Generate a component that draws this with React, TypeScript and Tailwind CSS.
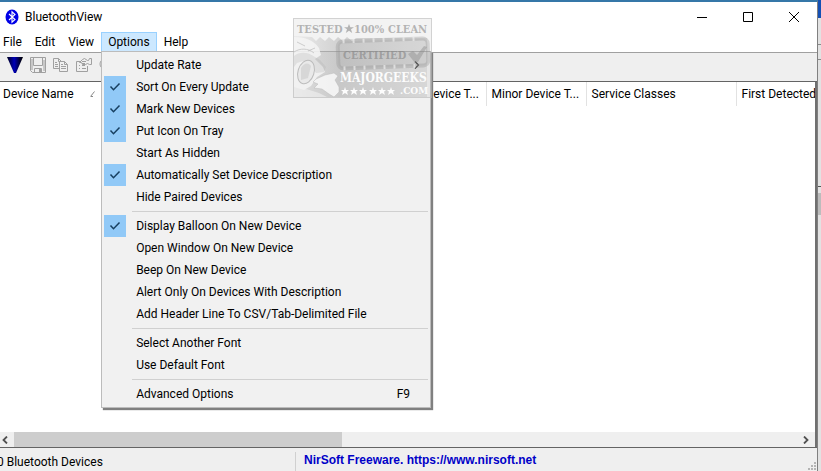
import React, { useState } from "react";
import clsx from "clsx";

type MenuEntry = {
  label: string;
  checked?: boolean;
  submenu?: boolean;
  shortcut?: string;
};

const menuGroups: MenuEntry[][] = [
  [
    { label: "Update Rate", submenu: true },
    { label: "Sort On Every Update", checked: true },
    { label: "Mark New Devices", checked: true },
    { label: "Put Icon On Tray", checked: true },
    { label: "Start As Hidden" },
    { label: "Automatically Set Device Description", checked: true },
    { label: "Hide Paired Devices" }
  ],
  [
    { label: "Display Balloon On New Device", checked: true },
    { label: "Open Window On New Device" },
    { label: "Beep On New Device" },
    { label: "Alert Only On Devices With Description" },
    { label: "Add Header Line To CSV/Tab-Delimited File" }
  ],
  [{ label: "Select Another Font" }, { label: "Use Default Font" }],
  [{ label: "Advanced Options", shortcut: "F9" }]
];

const BluetoothLogo = () => (
  <svg width="14" height="16" viewBox="0 0 14 16">
    <ellipse cx="7" cy="8" rx="6.5" ry="7.5" fill="#0000e6" />
    <path d="M4 5l6 5.5L7 13.2V2.8l3 2.7L4 11" fill="none" stroke="#fff" strokeWidth="1.1" />
  </svg>
);

const TriangleIcon = () => (
  <svg width="16" height="16" viewBox="0 0 16 16">
    <defs>
      <linearGradient id="tri" x1="0" y1="0" x2="1" y2="0">
        <stop offset="0" stopColor="#000018" />
        <stop offset="0.45" stopColor="#0000b8" />
        <stop offset="0.8" stopColor="#000030" />
        <stop offset="1" stopColor="#000" />
      </linearGradient>
    </defs>
    <path d="M0 0h16L9 16H7z" fill="url(#tri)" />
  </svg>
);

const SaveIcon = () => (
  <svg width="16" height="16" viewBox="0 0 16 16" fill="none" stroke="#a0a0a0">
    <path d="M.5.5h15v15h-13l-2-2z" />
    <path d="M3.500 .5v8h9v-8M4.500 15.500v-4h7v4M2 2v11M14 3v11" />
    <path d="M9 12h2v3H9z" fill="#a0a0a0" stroke="none" />
  </svg>
);

const CopyIcon = () => (
  <svg width="16" height="16" viewBox="0 0 16 16" fill="none" stroke="#a0a0a0">
    <path d="M6 11.500H.5v-10h5l3 3M5.500 1.500v3h3" />
    <path d="M2 5.500h2M2 7.500h3M2 9.500h3" />
    <path d="M6.500 4.500h5l3 3v7h-8zM11.500 4.500v3h3" fill="#efefef" />
    <path d="M8 7.500h2M8 9.500h5M8 11.500h5" />
  </svg>
);

const PropertiesIcon = () => (
  <svg width="16" height="16" viewBox="0 0 16 16" fill="none" stroke="#a0a0a0">
    <path d="M5 4.500H.5v10h11V9" />
    <path d="M3 8.500h1M6 8.500h3M3 11.500h1M6 11.500h4" />
    <path d="M3.500 5.500l3-3 2-1 3 2h1l1-2h2v6h-2l-2-1-2 1h-3l-1-2z" fill="#efefef" />
    <path d="M6 4.500h4M6 6.500h3" />
  </svg>
);

const FindIcon = () => (
  <svg width="16" height="16" viewBox="0 0 16 16" fill="none" stroke="#a0a0a0">
    <circle cx="6" cy="7" r="5" />
    <path d="M10 11l4 4" />
  </svg>
);

const CheckIcon = () => (
  <svg width="12" height="10" viewBox="0 0 12 10">
    <path d="M1.500 4.500l3 3.200 6-6.200" fill="none" stroke="#173f60" strokeWidth="1.500" />
  </svg>
);

const CertifiedStamp = () => (
  <svg
    className="pointer-events-none absolute left-[293px] top-4 z-20"
    width="139"
    height="80"
    viewBox="0 0 139 80"
    fontFamily="'DejaVu Serif Condensed', 'DejaVu Serif', serif"
    fontWeight="bold"
  >
    <defs>
      <linearGradient id="stampShade" x1="0" y1="0" x2="1" y2="0">
        <stop offset="0" stopColor="#888" stopOpacity=".08" />
        <stop offset="0.35" stopColor="#888" stopOpacity=".32" />
        <stop offset="1" stopColor="#888" stopOpacity=".16" />
      </linearGradient>
    </defs>
    <rect x=".5" y=".5" width="138" height="79" fill="#8a8a8a" fillOpacity=".1" stroke="#b8b8b8" strokeOpacity=".6" />
    <path d="M1 18l18 1 4 4 4-4 5 4 4-4 5 4 4-4 5 4 4-4 5 4 4-3h71v59H1z" fill="url(#stampShade)" />
    {/* face, glasses and hand */}
    <path d="M1 19c10 0 20 3 25 11l2 7-6 4 8 8 2 5-8 5-6 9-7 4-10-3z" fill="#f4f4f4" fillOpacity=".85" />
    <path d="M1 34c6-4 14-4 20 1M4 24l8 4M22 30l-7 3" fill="none" stroke="#bbb" strokeOpacity=".7" />
    <path d="M1 38c6-5 14-4 21 1l5 3 6 7-2 5-8 1-5-7-8-5-6 2-3 4z" fill="#aaa" fillOpacity=".25" />
    <ellipse cx="13" cy="54" rx="8" ry="12" fill="#e9e9e9" stroke="#bcbcbc" transform="rotate(18 13 54)" />
    <path d="M8 50c3-5 7-6 10-2l-3 12-7 2z" fill="#ccc" fillOpacity=".6" />
    <path d="M23 61l9-4 9-2 4 3-3 4 4 7v5l-5 5-5-3-7-5-8-1 4-4-5-2z" fill="#f6f6f6" fillOpacity=".9" stroke="#bbb" strokeOpacity=".5" />
    <path d="M1 67l9 3 16 5 8 4H1z" fill="#f2f2f2" fillOpacity=".6" />
    <g fill="#888" fillOpacity=".6">
      <text x="4" y="15" fontSize="11">TESTED</text>
      <path d="M56 6l1.300 3.300h3.700l-3 2 1.200 3.700-3.200-2.200-3.200 2.200L54 11.300l-3-2h3.700z" />
      <text x="61" y="15" fontSize="11">100%</text>
      <text x="95" y="15" fontSize="11">CLEAN</text>
    </g>
    <g transform="rotate(-2 90 35)">
      <rect x="45" y="22" width="90" height="27" rx="5" fill="#888" fillOpacity=".12" stroke="#8c8c8c" strokeOpacity=".3" strokeWidth="4" />
      <path d="M50 22h80M50 49h80" stroke="#eee" strokeOpacity=".7" strokeDasharray="2 8" strokeWidth="4" />
    </g>
    <text x="50" y="41" fontSize="11" fill="#858585" fillOpacity=".6">
      CERTIFIED
    </text>
    <path d="M115 36l5-3 4 4 7-9 3 1-9 15-3 1z" fill="#858585" fillOpacity=".4" />
    <g fill="#fcfcfc">
      <text x="47" y="64" fontSize="12">MAJORGEEKS</text>
      <text x="107" y="76" fontSize="10">.COM</text>
      {[52, 61, 70, 80, 89, 98].map((x) => (
        <path key={x} transform={`translate(${x} 73)`} d="M0-4l1 3h3L2 .8 3 4 0 2-3 4-2 .8-4-1h3z" />
      ))}
    </g>
  </svg>
);

const OptionsMenu = () => {
  const [groups, setGroups] = useState<MenuEntry[][]>(menuGroups);

  const handleToggle = (label: string) => {
    setGroups((prev) =>
      prev.map((group) => group.map((item) => (item.label === label && !item.submenu && !item.shortcut ? { ...item, checked: !item.checked } : item)))
    );
  };

  return (
    <div
      role="menu"
      className="absolute left-0 top-full z-10 -mt-px w-[330px] border border-[#bcbcbc] bg-[#f1f1f1] p-0.5 shadow-[2px_2px_1px_#808080]"
    >
      {groups.map((group, index) => (
        <React.Fragment key={index}>
          {index > 0 && <div role="separator" className="my-[3px] ml-7 h-px bg-[#d0d0d0]" />}
          {group.map((item) => (
            <button
              key={item.label}
              type="button"
              role={item.checked ? "menuitemcheckbox" : "menuitem"}
              aria-checked={item.checked}
              onClick={() => handleToggle(item.label)}
              className="flex h-[22px] w-full items-center text-left"
            >
              <span className={clsx("flex h-full w-[22px] items-center justify-center", item.checked && "bg-[#91c9f7]")}>
                {item.checked && <CheckIcon />}
              </span>
              <span className="flex-1 whitespace-nowrap pl-2.5">{item.label}</span>
              {item.shortcut && <span className="pr-[18px]">{item.shortcut}</span>}
              {item.submenu && (
                <svg className="mr-2" width="6" height="8" viewBox="0 0 6 8">
                  <path d="M1 .5L4.500 4 1 7.500" fill="none" stroke="#222" strokeWidth="1.200" />
                </svg>
              )}
            </button>
          ))}
        </React.Fragment>
      ))}
    </div>
  );
};

const TitleBar = () => (
  <header className="flex h-[30px] items-center bg-white pl-[5px]">
    <BluetoothLogo />
    <h1 className="flex-1 pl-1.5">BluetoothView</h1>
    <div className="flex h-full">
      <button type="button" aria-label="Minimize" className="flex w-[46px] items-center justify-center">
        <svg width="10" height="11" viewBox="0 0 10 11" stroke="#000">
          <path d="M0 5.500h10" />
        </svg>
      </button>
      <button type="button" aria-label="Maximize" className="flex w-[46px] items-center justify-center">
        <svg width="10" height="10" viewBox="0 0 10 10" fill="none" stroke="#000">
          <path d="M.5.5h9v9h-9z" />
        </svg>
      </button>
      <button type="button" aria-label="Close" className="flex w-[46px] items-center justify-center">
        <svg width="10" height="10" viewBox="0 0 10 10" stroke="#000">
          <path d="M0 0l10 10M10 0L0 10" />
        </svg>
      </button>
    </div>
  </header>
);

const MenuBar = () => {
  const [open, setOpen] = useState<boolean>(true);

  return (
    <nav className="-ml-[3px] flex h-5 gap-px bg-white">
      <button type="button" className="px-1.5">File</button>
      <button type="button" className="px-1.5">Edit</button>
      <button type="button" className="px-1.5">View</button>
      <div className="relative">
        <button
          type="button"
          aria-expanded={open}
          onClick={() => setOpen(!open)}
          className="h-full border border-[#99d1ff] bg-[#cce8ff] px-1.5"
        >
          Options
        </button>
        {open && <OptionsMenu />}
      </div>
      <button type="button" className="px-1.5">Help</button>
    </nav>
  );
};

const Toolbar = () => (
  <div className="flex h-[30px] items-center gap-[7px] border-y border-t-[#a0a0a0] border-b-[#646464] bg-[#efefef] pl-[7px] pb-1">
    <button type="button" aria-label="Start"><TriangleIcon /></button>
    <button type="button" aria-label="Save"><SaveIcon /></button>
    <button type="button" aria-label="Copy"><CopyIcon /></button>
    <button type="button" aria-label="Properties"><PropertiesIcon /></button>
    <button type="button" aria-label="Find"><FindIcon /></button>
  </div>
);

const DeviceList = () => (
  <main className="flex min-h-0 flex-1 flex-col border-r-2 border-[#707070] bg-white">
    <div className="flex-1 overflow-hidden">
      <table className="w-[886px] table-fixed">
        <thead>
          <tr className="h-6 text-left">
            <th className="w-[386px] border-r border-[#e2e2e2] pl-[3px] font-normal">
              <span className="flex items-center gap-4">
                Device Name
                <svg width="5" height="6" viewBox="0 0 5 6">
                  <path d="M.5 5.500L4.500 .5M1 5.500h2" stroke="#888" fill="none" />
                </svg>
              </span>
            </th>
            <th className="w-[100px] border-r border-[#e2e2e2] pl-[5px] font-normal">Major Device T...</th>
            <th className="w-[100px] border-r border-[#e2e2e2] pl-[5px] font-normal">Minor Device T...</th>
            <th className="w-[150px] border-r border-[#e2e2e2] pl-[5px] font-normal">Service Classes</th>
            <th className="w-[150px] pl-[5px] font-normal">First Detected</th>
          </tr>
        </thead>
      </table>
    </div>
    <div className="flex h-[15px] bg-[#efefef]">
      <button type="button" aria-label="Scroll left" className="flex w-3.5 items-center pl-0.5">
        <svg width="6" height="8" viewBox="0 0 6 8">
          <path d="M5 .5L1.500 4 5 7.500" fill="none" stroke="#505050" strokeWidth="1.800" />
        </svg>
      </button>
      <div className="flex-1">
        <div className="h-full w-5/12 bg-[#cdcdcd]" />
      </div>
      <button type="button" aria-label="Scroll right" className="flex w-3.5 items-center pl-0.5">
        <svg width="6" height="8" viewBox="0 0 6 8">
          <path d="M1 .5L4.500 4 1 7.500" fill="none" stroke="#505050" strokeWidth="1.800" />
        </svg>
      </button>
    </div>
  </main>
);

const StatusBar = () => (
  <footer className="flex h-6 border-t border-[#646464] bg-[#efefef] pt-0.5">
    <div className="-ml-[3px] mt-0.5 w-[299px] border-r border-[#d0d0d0] pt-0.5">0 Bluetooth Devices</div>
    <a href="https://www.nirsoft.net" className="flex-1 pl-2 pt-0.5 font-['Liberation_Sans',sans-serif] font-bold text-[#0000c8]">
      NirSoft Freeware. https://www.nirsoft.net
    </a>
    <svg className="self-end" width="10" height="9" viewBox="0 0 10 9" fill="#b4b4b4">
      <path d="M7 0h2v2H7zM7 3h2v2H7zM4 3h2v2H4zM7 6h2v2H7zM4 6h2v2H4zM1 6h2v2H1z" />
    </svg>
  </footer>
);

const App = () => {
  return (
    <div className="flex h-screen overflow-hidden bg-[#e2e2e2] font-['Roboto',sans-serif] text-[12px] leading-4 text-black">
      <div className="relative flex min-w-0 flex-1 flex-col border-t-2 border-r border-t-[#3577a8] border-r-[#808080] bg-white">
        <TitleBar />
        <MenuBar />
        <Toolbar />
        <DeviceList />
        <StatusBar />
        <CertifiedStamp />
      </div>
      {/* sliver of the window behind */}
      <div className="flex w-[3px] flex-col">
        <div className="h-[18px] bg-[#1450b4]" />
        <div className="h-[26px] bg-[#e2e2e2]" />
        <div className="h-4 border-y border-[#8a8a8a]" />
        <div className="h-[126px] bg-[#e2e2e2]" />
        <div className="h-[7px] border-t border-[#555]" />
        <div className="h-[22px] bg-[#bcbcbc]" />
      </div>
    </div>
  );
};

export default App;
